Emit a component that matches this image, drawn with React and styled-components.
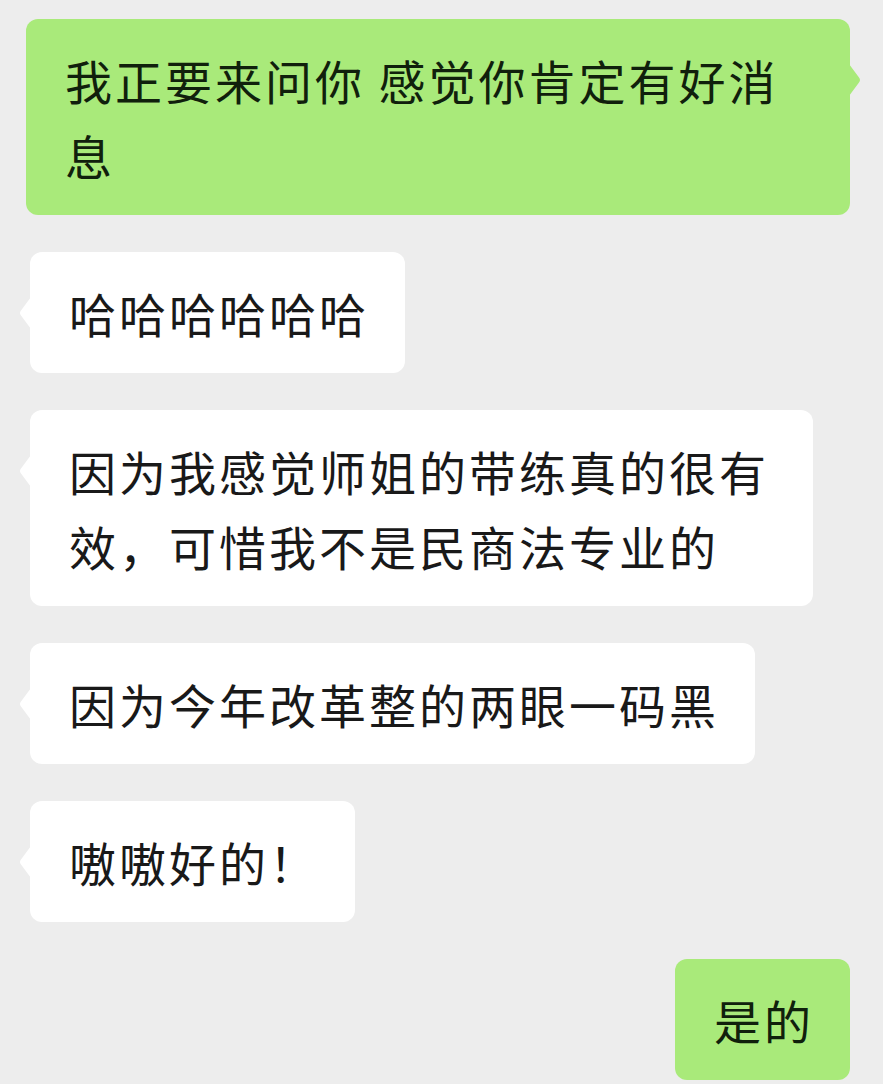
import React from 'react';
import styled, { createGlobalStyle } from 'styled-components';

const GlobalStyle = createGlobalStyle`
  html, body {
    margin: 0;
    padding: 0;
    background: #ededed;
  }
  body {
    font-family: "Noto Sans CJK SC", "Noto Sans", sans-serif;
  }
`;

const Chat = styled.div`
  display: flex;
  flex-direction: column;
  gap: 37px;
  padding: 19px 0 0;
  height: 1084px;
  box-sizing: border-box;
  overflow: hidden;
  background: #ededed;
`;

const Row = styled.div`
  display: flex;
  justify-content: ${(p) => (p.$mine ? 'flex-end' : 'flex-start')};
  padding: ${(p) => (p.$mine ? '0 33px 0 26px' : '0 0 0 30px')};
`;

const Bubble = styled.div`
  position: relative;
  box-sizing: border-box;
  max-width: ${(p) => (p.$mine ? '824px' : '783px')};
  padding: 23px 36px 23px 39px;
  border-radius: 12px;
  background: ${(p) => (p.$mine ? '#a9ea7a' : '#ffffff')};
  color: ${(p) => (p.$mine ? '#10200c' : '#191919')};
  font-size: 47px;
  letter-spacing: 3px;
  line-height: 75px;
  word-break: break-all;
`;

const Tail = styled.svg`
  position: absolute;
  top: 45px;
  width: 13px;
  height: 32px;
  ${(p) => (p.$mine ? 'right: -12px; transform: scaleX(-1);' : 'left: -12px;')}
`;

const messages = [
  { mine: true, tail: true, text: '我正要来问你 感觉你肯定有好消息' },
  { mine: false, tail: true, text: '哈哈哈哈哈哈' },
  { mine: false, tail: true, text: '因为我感觉师姐的带练真的很有效，可惜我不是民商法专业的' },
  { mine: false, tail: true, text: '因为今年改革整的两眼一码黑' },
  { mine: false, tail: true, text: '嗷嗷好的！' },
  { mine: true, tail: false, text: '是的' },
];

const Message = ({ mine, tail, text }) => (
  <Row $mine={mine}>
    <Bubble $mine={mine}>
      {tail && (
        <Tail $mine={mine} viewBox="0 0 13 32">
          <path
            d="M13 0 L3 13.5 Q1 16 3 18.5 L13 32 Z"
            fill={mine ? '#a9ea7a' : '#ffffff'}
          />
        </Tail>
      )}
      {text}
    </Bubble>
  </Row>
);

const App = () => {
  return (
    <>
      <GlobalStyle />
      <Chat>
        {messages.map((m, i) => (
          <Message key={i} {...m} />
        ))}
      </Chat>
    </>
  );
};

export default App;
